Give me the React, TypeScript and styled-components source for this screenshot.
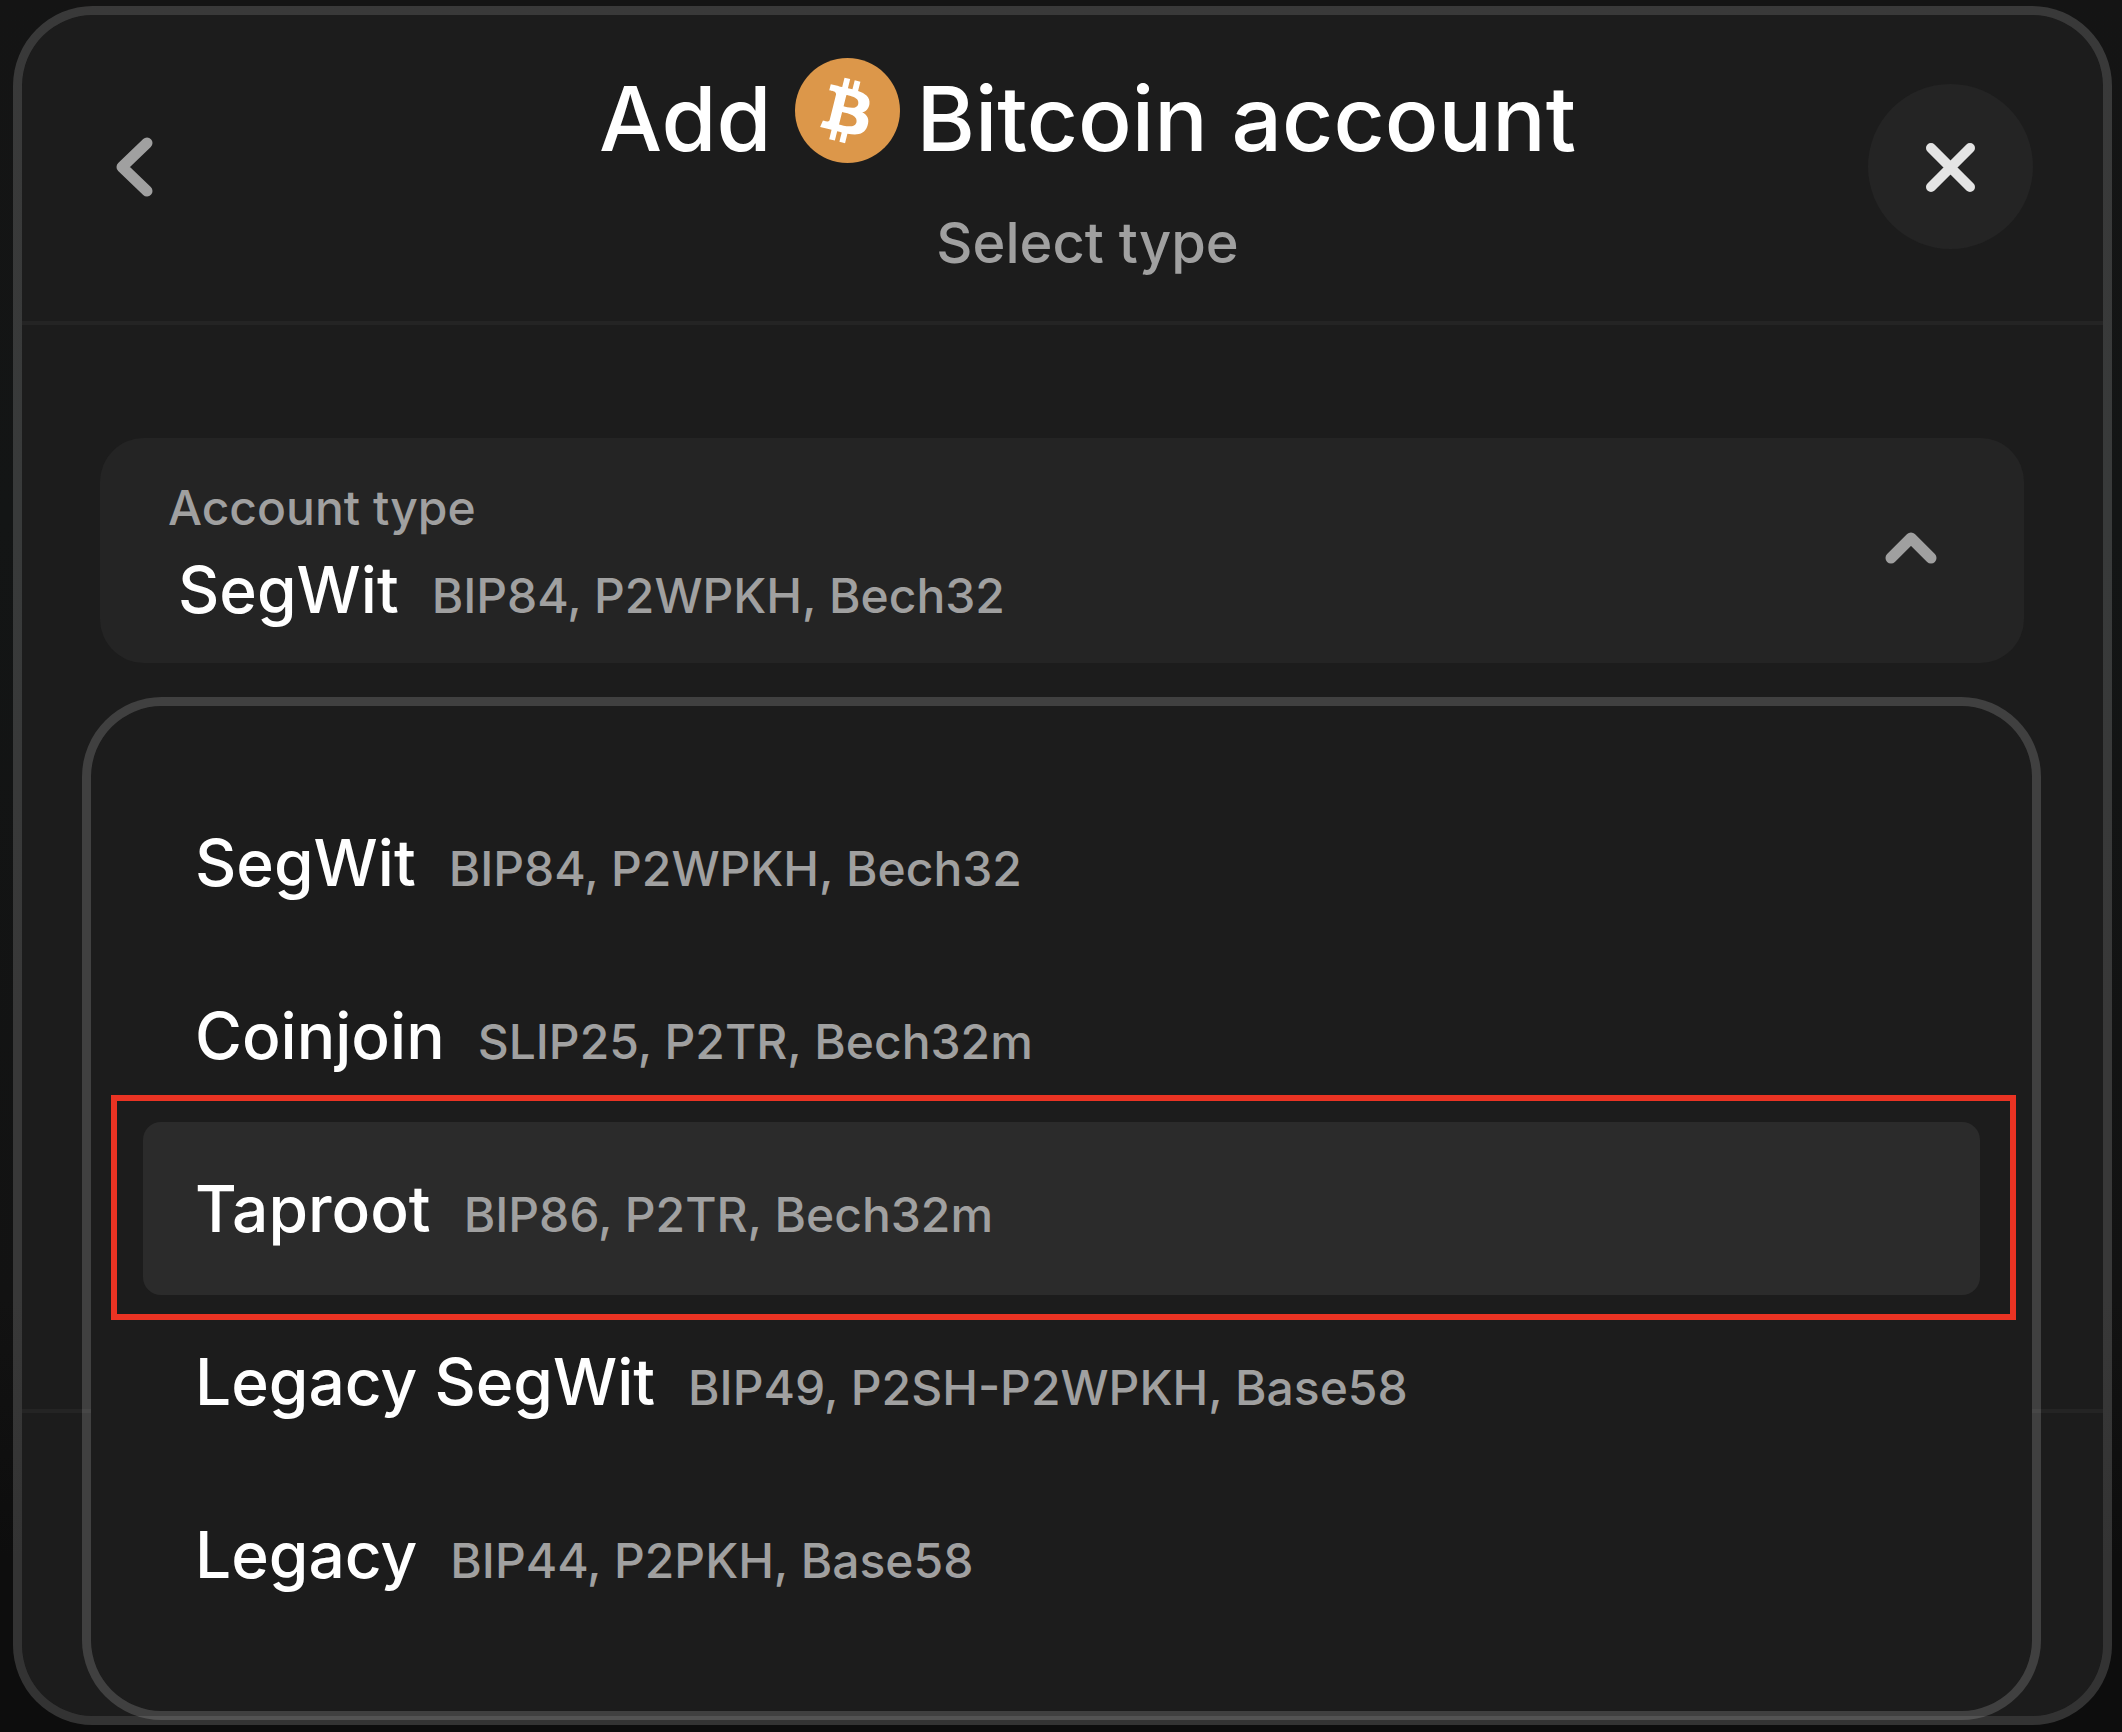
import React, { useState } from 'react';
import styled, { createGlobalStyle } from 'styled-components';

const color = {
  surface: '#1c1c1c',
  raised: '#242424',
  hover: '#2b2b2b',
  line: '#242424',
  outline: 'rgba(255, 255, 255, 0.16)',
  text: '#ffffff',
  muted: '#a0a0a0',
  bright: '#e4e4e4',
  highlight: '#ea3323',
};

const GlobalStyle = createGlobalStyle`
  *, *::before, *::after { box-sizing: border-box; }
  body {
    margin: 0;
    background: #0e0e0e;
    color: ${color.text};
    font-family: Inter, "Liberation Sans", sans-serif;
    font-weight: 500;
  }
  button {
    border: 0;
    padding: 0;
    background: none;
    color: inherit;
    font: inherit;
    text-align: left;
    cursor: pointer;
  }
`;

const Page = styled.div`
  display: flex;
  min-height: 100vh;
  padding: 6px 10px 7px 13px;
  background: linear-gradient(180deg, #141414 0%, #131515 30%, #121212 75%, #0d0d0d 90%);
`;

const Modal = styled.section`
  display: flex;
  flex: 1;
  flex-direction: column;
  border: 9px solid ${color.outline};
  border-radius: 80px;
  background: ${color.surface};
  background-clip: padding-box;
`;

const Header = styled.header`
  display: grid;
  grid-template-columns: 215px 1fr 165px;
  align-items: start;
  padding: 43px 70px 42px;
  border-bottom: 4px solid ${color.line};
`;

const BackButton = styled.button`
  display: grid;
  place-items: center;
  width: 83px;
  height: 165px;
  margin-top: 26px;
  color: ${color.muted};
`;

const CloseButton = styled.button`
  display: grid;
  place-items: center;
  width: 165px;
  height: 165px;
  margin-top: 26px;
  border-radius: 50%;
  background: ${color.raised};
  color: ${color.bright};
`;

const Heading = styled.div`
  display: flex;
  flex-direction: column;
  align-items: center;
  gap: 28px;
`;

const Title = styled.h1`
  display: flex;
  align-items: center;
  margin: 0;
  font-size: 89px;
  font-weight: 500;
  line-height: 120px;
  white-space: nowrap;
`;

const CoinLogo = styled.svg`
  width: 105px;
  height: 105px;
  margin: 0 16px 16px 24px;
`;

const Subtitle = styled.p`
  margin: 0;
  color: ${color.muted};
  font-size: 56px;
  line-height: 72px;
`;

const Body = styled.div`
  flex: 1;
  padding: 113px 79px 0 78px;
`;

const Footer = styled.footer`
  min-height: 307px;
  border-top: 4px solid ${color.line};
`;

const Field = styled.div`
  position: relative;
`;

const Trigger = styled.button`
  display: flex;
  align-items: center;
  justify-content: space-between;
  width: 100%;
  padding: 42px 81px 33px 68px;
  border-radius: 44px;
  background: ${color.raised};
`;

const FieldText = styled.span`
  display: flex;
  flex-direction: column;
  gap: 14px;
`;

const TriggerArrow = styled.span`
  display: flex;
  color: ${color.muted};
`;

const FieldLabel = styled.span`
  color: ${color.muted};
  font-size: 48px;
  line-height: 56px;
`;

const TypeText = styled.span<{ $inset?: boolean }>`
  display: flex;
  align-items: baseline;
  gap: 33px;
  padding-left: ${(p) => (p.$inset ? '10px' : '0')};
  line-height: 80px;
  white-space: nowrap;
`;

const TypeName = styled.span`
  font-size: 64px;
`;

const TypeDetail = styled.span`
  color: ${color.muted};
  font-size: 48px;
  line-height: 56px;
`;

const Menu = styled.ul`
  position: absolute;
  z-index: 1;
  top: calc(100% + 34px);
  right: -17px;
  left: -18px;
  margin: 0;
  padding: 70px 52px;
  border: 9px solid ${color.outline};
  border-radius: 80px;
  background: ${color.surface};
  background-clip: padding-box;
  list-style: none;
`;

const Option = styled.li<{ $marked: boolean }>`
  position: relative;
  display: flex;
  align-items: center;
  height: 173px;
  padding: 0 52px;
  border-radius: 18px;
  background: ${(p) => (p.$marked ? color.hover : 'transparent')};
  cursor: pointer;

  &::after {
    content: ${(p) => (p.$marked ? "''" : 'none')};
    position: absolute;
    inset: -27px -36px -25px -32px;
    border: 6px solid ${color.highlight};
    pointer-events: none;
  }
`;

const Stroke = ({ d, width }: { d: string; width: number }) => (
  <svg
    width={64}
    height={64}
    viewBox="0 0 64 64"
    fill="none"
    stroke="currentColor"
    strokeWidth={width}
    strokeLinecap="round"
    strokeLinejoin="round"
    aria-hidden="true"
  >
    <path d={d} />
  </svg>
);

const BitcoinLogo = () => (
  <CoinLogo viewBox="0 0 32 32" aria-hidden="true">
    <circle cx="16" cy="16" r="16" fill="#dc974a" />
    <path
      fill="#fff"
      transform="translate(-0.5 0)"
      d="M23.189 14.02c.314-2.096-1.283-3.223-3.465-3.975l.708-2.84-1.728-.43-.69 2.765c-.454-.114-.92-.22-1.385-.326l.695-2.783L15.596 6l-.708 2.839c-.376-.086-.746-.17-1.104-.26l.002-.009-2.384-.595-.46 1.846s1.283.294 1.256.312c.7.175.826.638.805 1.006l-.806 3.235c.048.012.11.03.18.057l-.183-.045-1.13 4.532c-.086.212-.303.531-.793.41.018.025-1.256-.313-1.256-.313l-.858 1.978 2.25.561c.418.105.828.215 1.231.318l-.715 2.872 1.727.43.708-2.84c.472.127.93.245 1.378.357l-.706 2.828 1.728.43.715-2.866c2.948.558 5.164.333 6.097-2.333.752-2.146-.037-3.385-1.588-4.192 1.13-.26 1.98-1.003 2.207-2.538zm-3.95 5.538c-.533 2.147-4.148.986-5.32.695l.95-3.805c1.172.293 4.929.872 4.37 3.11zm.535-5.569c-.487 1.953-3.495.96-4.47.717l.86-3.45c.975.243 4.118.696 3.61 2.733z"
    />
  </CoinLogo>
);

const accountTypes = [
  { name: 'SegWit', detail: 'BIP84, P2WPKH, Bech32' },
  { name: 'Coinjoin', detail: 'SLIP25, P2TR, Bech32m' },
  { name: 'Taproot', detail: 'BIP86, P2TR, Bech32m' },
  { name: 'Legacy SegWit', detail: 'BIP49, P2SH-P2WPKH, Base58' },
  { name: 'Legacy', detail: 'BIP44, P2PKH, Base58' },
];

export default function App() {
  const [open, setOpen] = useState(true);
  const [selected, setSelected] = useState(0);
  const [marked, setMarked] = useState(2);
  const current = accountTypes[selected];

  return (
    <>
      <GlobalStyle />
      <Page>
        <Modal role="dialog" aria-labelledby="title">
          <Header>
            <BackButton type="button" aria-label="Back">
              <Stroke d="M45 8 20 32 45 56" width={11} />
            </BackButton>
            <Heading>
              <Title id="title">
                <span>Add</span>
                <BitcoinLogo />
                <span>Bitcoin account</span>
              </Title>
              <Subtitle>Select type</Subtitle>
            </Heading>
            <CloseButton type="button" aria-label="Close">
              <Stroke d="M12 13 51 52M51 13 12 52" width={10} />
            </CloseButton>
          </Header>
          <Body>
            <Field>
              <Trigger
                type="button"
                aria-haspopup="listbox"
                aria-expanded={open}
                aria-labelledby="type-label type-value"
                onClick={() => setOpen(!open)}
              >
                <FieldText>
                  <FieldLabel id="type-label">Account type</FieldLabel>
                  <TypeText id="type-value" $inset>
                    <TypeName>{current.name}</TypeName>
                    <TypeDetail>{current.detail}</TypeDetail>
                  </TypeText>
                </FieldText>
                <TriggerArrow>
                  <Stroke d={open ? 'M12 35 32 15 52 35' : 'M12 21 32 41 52 21'} width={11} />
                </TriggerArrow>
              </Trigger>
              {open && (
                <Menu role="listbox" aria-labelledby="type-label">
                  {accountTypes.map((type, i) => (
                    <Option
                      key={type.name}
                      role="option"
                      aria-selected={i === selected}
                      $marked={i === marked}
                      onMouseEnter={() => setMarked(i)}
                      onClick={() => {
                        setSelected(i);
                        setOpen(false);
                      }}
                    >
                      <TypeText>
                        <TypeName>{type.name}</TypeName>
                        <TypeDetail>{type.detail}</TypeDetail>
                      </TypeText>
                    </Option>
                  ))}
                </Menu>
              )}
            </Field>
          </Body>
          <Footer />
        </Modal>
      </Page>
    </>
  );
}
